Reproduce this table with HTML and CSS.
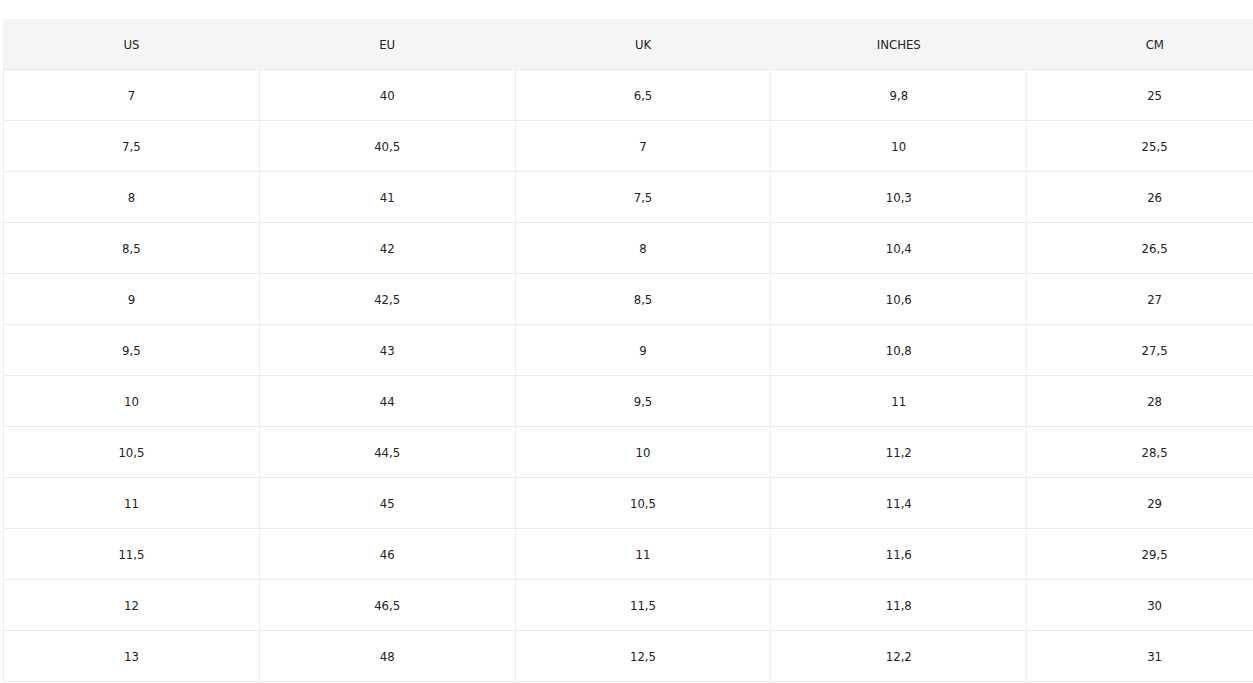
FILE: index.html
```html
<!DOCTYPE html>
<html>
<head>
<meta charset="utf-8">
<link rel="stylesheet" href="styles.css">
</head>
<body>
<div class="wrap">
<table class="sizes">
<thead>
<tr><th>US</th><th>EU</th><th>UK</th><th>INCHES</th><th>CM</th></tr>
</thead>
<tbody>
<tr><td>7</td><td>40</td><td>6,5</td><td>9,8</td><td>25</td></tr>
<tr><td>7,5</td><td>40,5</td><td>7</td><td>10</td><td>25,5</td></tr>
<tr><td>8</td><td>41</td><td>7,5</td><td>10,3</td><td>26</td></tr>
<tr><td>8,5</td><td>42</td><td>8</td><td>10,4</td><td>26,5</td></tr>
<tr><td>9</td><td>42,5</td><td>8,5</td><td>10,6</td><td>27</td></tr>
<tr><td>9,5</td><td>43</td><td>9</td><td>10,8</td><td>27,5</td></tr>
<tr><td>10</td><td>44</td><td>9,5</td><td>11</td><td>28</td></tr>
<tr><td>10,5</td><td>44,5</td><td>10</td><td>11,2</td><td>28,5</td></tr>
<tr><td>11</td><td>45</td><td>10,5</td><td>11,4</td><td>29</td></tr>
<tr><td>11,5</td><td>46</td><td>11</td><td>11,6</td><td>29,5</td></tr>
<tr><td>12</td><td>46,5</td><td>11,5</td><td>11,8</td><td>30</td></tr>
<tr><td>13</td><td>48</td><td>12,5</td><td>12,2</td><td>31</td></tr>
</tbody>
</table>
</div>
</body>
</html>
```
FILE: styles.css
```css
html, body {
  margin: 0;
  padding: 0;
  background: #fff;
  overflow: hidden;
}
.wrap {
  padding: 19px 0 0 3px;
}
.sizes {
  border-collapse: collapse;
  width: 1280px;
  table-layout: fixed;
  font-family: "Liberation Sans Narrow", "DejaVu Sans Condensed", "Liberation Sans", sans-serif;
  font-size: 13px;
  color: #222;
  text-align: center;
}
.sizes th {
  background: #f5f5f5;
  font-weight: normal;
  height: 50px;
  padding: 0;
  border-left: 1px solid #f5f5f5;
  border-bottom: 1px solid #ebebeb;
}
.sizes td {
  height: 50px;
  padding: 0;
  border: 1px solid #ececec;
  border-top: none;
}
```
